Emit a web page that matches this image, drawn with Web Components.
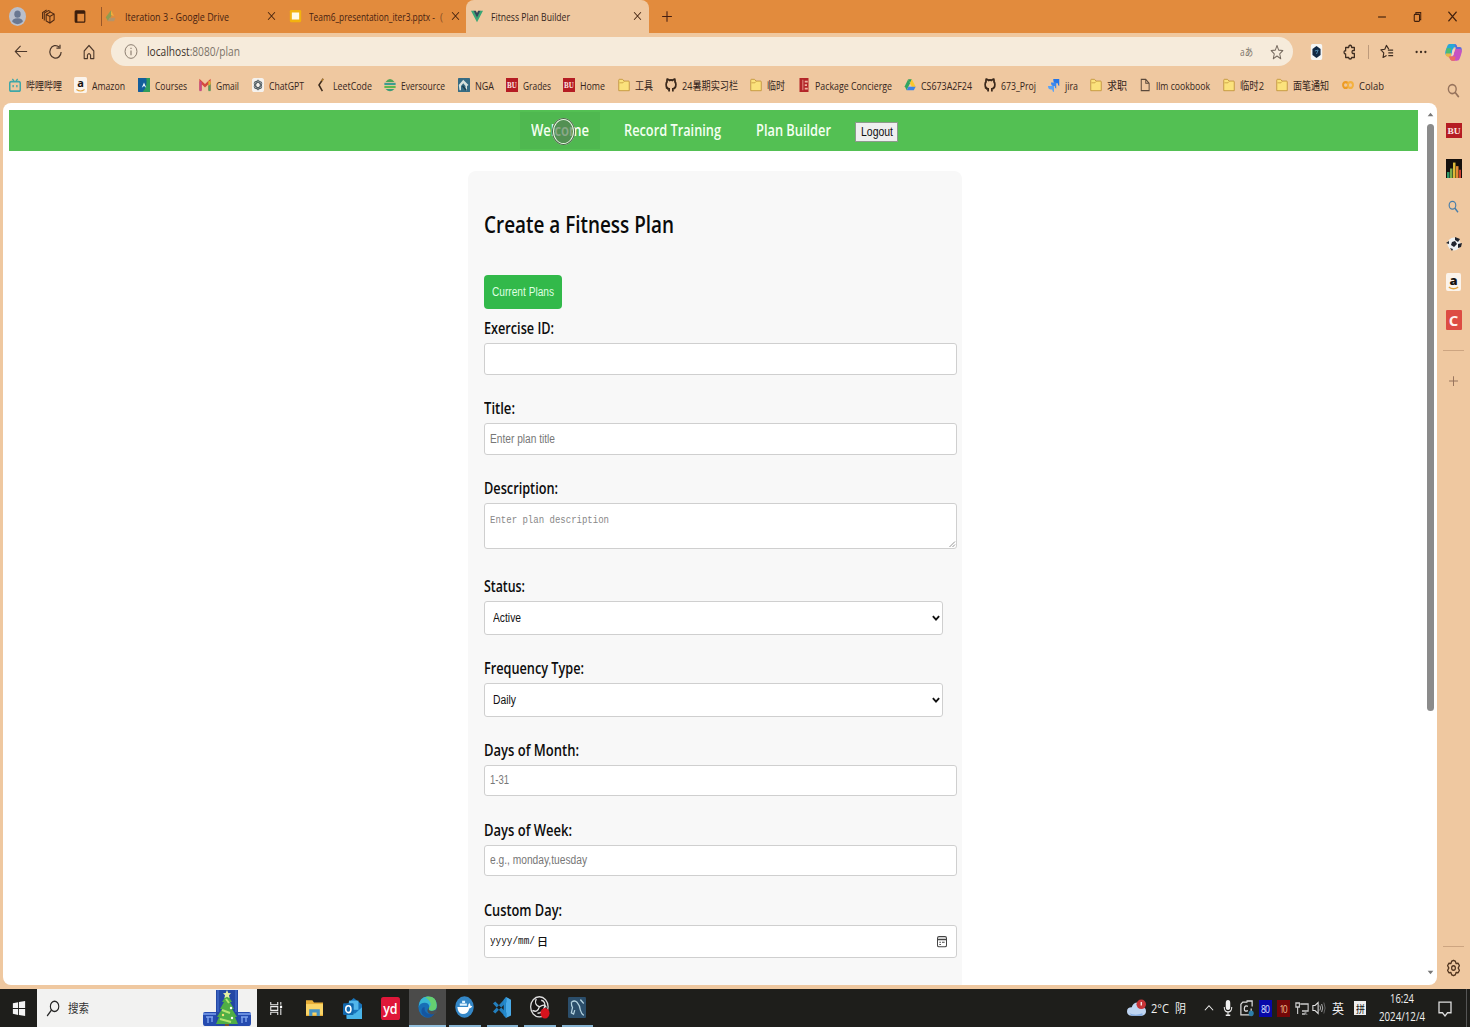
<!DOCTYPE html>
<html lang="en">
<head>
<meta charset="utf-8">
<title>Fitness Plan Builder</title>
<style>
html,body{margin:0;height:100%;overflow:hidden}
body{font-family:"Open Sans","Noto Sans CJK SC",sans-serif;font-size:11.5px;color:#35251b}
</style>
</head>
<body>
<desktop-screen></desktop-screen>
<script>
const ICONS = {
  avatar:'<circle cx="8" cy="8" r="8" fill="#b9bfcc"/><circle cx="8" cy="6" r="3" fill="#6a7891"/><path d="M3 12.500q0-3 5-3t5 3q-5 4-10 0" fill="#6a7891"/>',
  spaces:'<g fill="none" stroke="#4e2812" stroke-width="1.100"><path d="M5.500 5.500 10 3l4 2v6l-4.500 3-4-2zM5.500 5.500l4 2 4.500-2.500M9.500 7.500V14"/><path d="M3.500 11.500V4L8 1.500l2 1"/><path d="M1.700 10V3.500L6 1"/></g>',
  panel:'<rect x="2.500" y="2" width="11" height="12" rx="1" fill="none" stroke="#3a1d0c" stroke-width="1.300"/><path d="M2.500 2h11v3h-11zM2.500 5h2.500v9H2.500z" fill="#3a1d0c"/>',
  drive:'<path d="M5.500 1.500h5L8 6z" fill="#2b9f58"/><path d="M5.500 1.500 8 6 3.500 14 1 9.500z" fill="#31a561"/><path d="M10.500 1.500 15.500 10h-5L8 6z" fill="#fbc72b"/><path d="M6 10h9.500L13 14H3.500z" fill="#3d83e8"/>',
  drivefaded:'<path d="M8 1.500 10 6 4 14 1 9.500z" fill="#8f9c50"/><path d="M8 1.500 12 8 8 7z" fill="#f1ad3b"/><path d="M6 10h8L12 14H3.500z" fill="#b59369"/>',
  slides:'<rect x="1" y="1" width="14" height="14" rx="1.500" fill="#f2b20f"/><rect x="3.500" y="4" width="9" height="8" fill="#fffbe6"/>',
  vue:'<path d="M0 2h4l4 7 4-7h4L8 15z" fill="#3ba776"/><path d="M3.500 2h3L8 4.700 9.500 2h3L8 10z" fill="#31495a"/>',
  x:'<path d="m3 3 10 10M13 3 3 13" stroke="#40200e" stroke-width="1.400" fill="none"/>',
  plus:'<path d="M8 1.500v13M1.500 8h13" stroke="currentColor" stroke-width="1.400"/>',
  min:'<path d="M3.500 8h9" stroke="#40200e" stroke-width="1.300"/>',
  restore:'<rect x="4" y="5" width="6.500" height="8" rx="1" fill="none" stroke="#40200e" stroke-width="1.300"/><path d="M6 5V3h6v8h-1.500" fill="none" stroke="#40200e" stroke-width="1.200"/>',
  back:'<path d="M15 8H1.500M7.500 2 1.500 8l6 6" fill="none" stroke="#4c382b" stroke-width="1.250"/>',
  reload:'<path d="M14 8a6 6.300 0 1 1-2.200-5M12.800.8v3.400H9" fill="none" stroke="#4c382b" stroke-width="1.300"/>',
  home:'<path d="M2.500 7 8 1.500 13.500 7v7.500h-3.700V11Q8 8 6.200 11v3.500H2.500z" fill="none" stroke="#4c382b" stroke-width="1.250" stroke-linejoin="round"/>',
  info:'<ellipse cx="8" cy="8" rx="6.800" ry="7.300" fill="none" stroke="#807366" stroke-width="1"/><path d="M8 7v5M8 4v1.400" stroke="#807366" stroke-width="1.200"/>',
  star:'<path d="m8 1.500 1.900 4.600 4.800.4-3.600 3.300 1.200 5L8 12l-4.300 2.800 1.200-5L1.300 6.500l4.800-.4z" fill="none" stroke="#75695e" stroke-width="1.100" stroke-linejoin="round"/>',
  hex:'<rect x="1" y="0" width="14" height="16" rx="2" fill="#f5f6f5"/><path d="m8 2 5 3v6l-5 3-5-3V5z" fill="#102844"/><path d="m6 7 4-1-2 4" fill="none" stroke="#5490b5" stroke-width="1"/>',
  puzzle:'<path d="M3 3.500h3.500q0-2.300 1.700-2.300t1.700 2.300H13v3q-2.700-.4-2.700 1.500T13 9.500v4H9.900q0 1.500-1.700 1.500t-1.700-1.500H3V10Q1.200 10 1.200 8.300T3 6.800z" fill="none" stroke="#3d2c20" stroke-width="1.400" stroke-linejoin="round"/>',
  favs:'<path d="M10 5.500 7.300 1.500 5.500 5.600 1 6.300l3.300 3.200-.8 4.900 4-2.200" fill="none" stroke="#3d2c20" stroke-width="1.300" stroke-linejoin="round"/><path d="M9 6.500h6M9.500 9.500H15M9.500 12.500H15" stroke="#3d2c20" stroke-width="1.300"/>',
  dots:'<g fill="#3d2c20"><circle cx="3" cy="8" r="1.300"/><circle cx="8" cy="8" r="1.300"/><circle cx="13" cy="8" r="1.300"/></g>',
  copilot:'<path d="M4 1.500h5q1.500 0 2 2l-3 1-2 6H2q-2.500 0-1.500-3.500L2 3.500q.5-2 2-2" fill="#28a7d8"/><path d="M1 9h5l-1 3.500 2 2.500q-2 0-3-2.500l-2-1Q0 11 1 9" fill="#e9b646"/><path d="M1.500 5h4.500L5 9H1z" fill="#50bc6c"/><path d="M9 1.500q2 0 2.500 2.500H14q2.500 0 1.500 3.500l-1.500 4-4-2V5z" fill="#5b6bdc"/><path d="M10 5.500h4q2.500 0 1.500 3.500l-1.500 4q-.7 2-3 2H7q-2 0-3-3.500h3z" fill="#c653c2"/><path d="M4 11.500h6l-1 3.500H7q-2 0-3-3.500" fill="#ee6a62"/><path d="m7 6 2-.5-1 5-2 .5z" fill="#f5d5c9"/>',
  bili:'<rect x="1" y="4" width="14" height="11" rx="2" fill="none" stroke="#3fa7a7" stroke-width="2"/><path d="m4.500 1 2 2.500M11.500 1l-2 2.500M5.500 8v2.500M10.500 8v2.500" stroke="#3fa7a7" stroke-width="1.800"/>',
  amazon:'<rect width="16" height="16" rx="2" fill="#fbf4ec"/><path d="M3 12.500q5 3 10 0" stroke="#e3a33e" fill="none" stroke-width="1.200"/>',
  courses:'<rect width="16" height="16" rx="1.500" fill="#1d4b8d"/><path d="M0 0h11q2 8-4 16H1.500Q0 16 0 14.500z" fill="#135e9c"/><path d="M11 0h5v16H6q7-6 5-16" fill="#2e9c5b"/><path d="m5 11 3-6 3 6-3-2z" fill="#e9f5fc"/>',
  gmail:'<path d="M2 14V4l6 5 6-5v10" fill="none" stroke="#d64a3e" stroke-width="3"/><path d="M.5 4h3v11h-3z" fill="#c64f87"/><path d="M12.500 5h3v10h-3z" fill="#52a15d"/><path d="m12.500 3 3 1v3l-3 2z" fill="#e9ad33"/>',
  gpt:'<rect width="16" height="16" rx="3" fill="#f5f2ee"/><g fill="none" stroke="#4e5a60" stroke-width="1.100"><ellipse cx="8" cy="8" rx="3" ry="5.500"/><ellipse cx="8" cy="8" rx="3" ry="5.500" transform="rotate(60 8 8)"/><ellipse cx="8" cy="8" rx="3" ry="5.500" transform="rotate(120 8 8)"/></g>',
  leet:'<path d="M9.500 1 4 8l4.500 7" fill="none" stroke="#3c2a1b" stroke-width="2"/><path d="M7.500 3.500 10 1" stroke="#c98c31" stroke-width="1.500"/>',
  ever:'<path d="M2 4.500q6-7 12 0z" fill="#4da455"/><path d="M.5 5.500h15v2.500H.5z" fill="#3c9c91"/><path d="M.5 9h15v2.500H.5z" fill="#5cb850"/><path d="M2 12.500h12q-6 5.500-12 0" fill="#3b9b79"/>',
  nga:'<rect width="16" height="16" rx="1" fill="#356b83"/><path d="M1 8 7 2l7 6-2 1v5h-2V9L7 6 4 9v5H2" fill="#d7e2dd"/><path d="m6 9 5 5" stroke="#183e50" stroke-width="2"/>',
  bu:'<rect width="16" height="16" fill="#b51c23"/><text x="8" y="11.500" text-anchor="middle" font-family="Liberation Serif" font-weight="700" font-size="9.500" fill="#fbe4e1">BU</text>',
  folder:'<path d="M1 2.500Q1 1.500 2 1.500h4l2 2h6q1 0 1 1v10H1z" fill="#fbe27c" stroke="#bd8e36" stroke-width="1"/><path d="M2 5.500h4.500L8 4" fill="none" stroke="#c79c40"/>',
  github:'<path d="M5.500 15.500v-3q-4-.5-4-5Q1.500 5.600 2.700 4.300q-.4-1.800.4-3 1.700.2 2.900 1.300 2-.5 4 0Q11.200 1.500 12.900 1.300q.8 1.200.4 3 1.200 1.300 1.200 3.200 0 4.500-4 5v3" fill="none" stroke="#3a281b" stroke-width="2.300"/><path d="m1 11.500 2 .5q1 2.500 3 2" fill="none" stroke="#3a281b"/>',
  pack:'<path d="M2 0h12v16H2z" fill="#b32528"/><path d="M6 2h1v12H6zM9 3h4v2H9zM9 7h3v2H9zM9 11h4v2H9z" fill="#efb5a3"/>',
  jira:'<path d="M7 1h8v8q-2 0-2-3h-3q-3 0-3-5" fill="#2475e8"/><path d="M4 5h7v7q-2 0-2-3H7Q4 9 4 5" fill="#3c88ee"/><path d="M0 9h8v7q-2 0-2.500-3H4Q0 13 0 9" fill="#5ba3f5"/>',
  file:'<path d="M3 1.500h6L13.500 6v8.500H3zM9 1.500V6h4.500" fill="none" stroke="#5b493b" stroke-width="1.300"/>',
  colab:'<g fill="none" stroke-width="2.600"><circle cx="4.800" cy="8" r="3.400" stroke="#ed9b24"/><circle cx="11.200" cy="8" r="3.400" stroke="#f4b13f"/></g>',
  mag:'<circle cx="6.500" cy="6.500" r="4.800" fill="none" stroke="currentColor" stroke-width="1.700"/><path d="m10 10 4.500 5" stroke="currentColor" stroke-width="2"/>',
  chart:'<rect width="16" height="17" fill="#15100d"/><path d="M1 11h2.500v5H1z" fill="#2f9a69"/><path d="M4 8h2.500v8H4z" fill="#7cac4c"/><path d="M7 3h2.500v13H7z" fill="#dfba39"/><path d="M10 6h2.500v10H10z" fill="#e68a32"/><path d="M13 9h2v7h-2z" fill="#cb3f33"/>',
  soccer:'<circle cx="8" cy="8" r="6.500" fill="#edf0f1"/><path d="m6 6 3-1 2 3-3 3-3-2zM9 1l5 2-2 3-3-2zM12 8l4-1-1 4-3 1zM4 12l3 1-1 2zM0 7l3-2v3z" fill="#20242e"/>',
  cbox:'<rect width="16" height="16" rx="1" fill="#dd4c43"/>',
  gear:'<path d="M8 1.200 10 2l.7 2 2.300-.2 1.300 2.100L13 8l1.300 2.100-1.300 2.100-2.300-.2-.7 2-2 .8-2-.8-.7-2-2.300.2-1.300-2.100L3 8 1.700 5.900 3 3.800 5.300 4 6 2z" fill="none" stroke="#51351f" stroke-width="1.300" stroke-linejoin="round"/><circle cx="8" cy="8" r="2" fill="none" stroke="#51351f" stroke-width="1.300"/>',
  win:'<path d="m1 3 6-1v5.500H1zM8 1.800 15 1v6.500H8zM1 8.500h6V14l-6-1zM8 8.500h7V15l-7-1z" fill="#f4f4f4"/>',
  find:'<circle cx="9.800" cy="6" r="4.800" fill="none" stroke="#272727" stroke-width="1.300"/><path d="m6.300 9.500-5 5.500" stroke="#272727" stroke-width="1.400"/>',
  tree:'<path d="M13 0h22v36H13z" fill="#2448a4"/><path d="M0 24q0-2 2-2h11v14H2q-2 0-2-3zM35 22h11q2 0 2 2v9q0 3-2 3H35z" fill="#254bb0"/><path d="M0 24h13M35 24h13M3 27h7M38 27h7M5 27v6M9 27v5M39 27v6M43 27v5" stroke="#7fa4ed" stroke-width="1.400"/><path d="M15 0v22M33 0v22" stroke="#4c79d8"/><path d="m24 4 5 8h-2l4 7h-2l5 8h-2l3 7H13l3-7h-2l5-8h-2l4-7h-2z" fill="#4fae45"/><path d="m23 9 3 4M19 20l8 3M17 29l11 3" stroke="#b4e571" stroke-width="2"/><path d="m24 0 1.300 3 2.700.3-2 2 .6 3-2.600-1.500-2.600 1.500.6-3-2-2 2.700-.3z" fill="#e9f0a3"/><circle cx="28" cy="18" r="1.200" fill="#fff"/><circle cx="20" cy="25" r="1.200" fill="#ffdf77"/><circle cx="29" cy="28" r="1.200" fill="#fff"/><path d="M22 34h4v2h-4z" fill="#78502e"/>',
  task:'<g fill="none" stroke="#ededed" stroke-width="1.200"><path d="M2 1v3h8V1M2 15v-3h8v3"/><path d="M2 6h8v4H2zM13.500 1v3M13.500 8v7"/></g><path d="M12.500 5h2.500v2.500h-2.500z" fill="#fff"/>',
  explorer:'<path d="M0 1h6l1.500 2H16v12H0z" fill="#e7ae38"/><path d="M0 4.500h16V14H0z" fill="#fad567"/><path d="M3 9h10v6h-3v-3H6v3H3z" fill="#4693c4"/>',
  outlook:'<path d="m3 5 6-5 7 5v10H3z" fill="#1874bb"/><path d="M5 2h8v7H5z" fill="#52b6eb"/><path d="m3 8 7 4 6-5v9H3z" fill="#49b4e9"/><rect y="4" width="9" height="9" rx="1" fill="#1168ae"/><ellipse cx="4.500" cy="8.500" rx="2.200" ry="2.600" fill="none" stroke="#fff" stroke-width="1.300"/>',
  yd:'<rect width="16" height="16" rx="2" fill="#df1739"/><text x="8" y="11.500" text-anchor="middle" textLength="12" font-family="Open Sans" font-weight="600" font-size="10.500" fill="#fff">yd</text>',
  edge:'<circle cx="8" cy="8" r="7.700" fill="#176fb6"/><path d="M.5 8Q1 .3 8 .3q7.500 0 7.700 6.500 0 4-4.200 4-3.500 0-2-2.500Q9.500 5.500 7 5 2 4.500.5 8" fill="#39b8d4"/><path d="M6 .7q9.500-1.500 9.700 6 0 4.100-4.500 4-3-.4-1.700-2.500Q13 5 6 .7" fill="#65cf70"/><path d="M5.500 8q-.5 5 5 5 2.500 0 4-1-2.500 4-7 3.700Q2 14 3 10q.5-2 2.500-2" fill="#1556a1"/><path d="M9.400 8.500q-1.400 2.500 2.500 2.400 2 0 3.200-1L16 12l-2 1q-4 1-5.500-1T9.400 8.500" fill="#4b5155"/>',
  docker:'<circle cx="8" cy="8" r="7.800" fill="#3487c7"/><path d="M2 8h9q0-2 1-3 1.200 1 1 2 1 0 1.500.5-.7 1.500-2.500 1.500-1 4-5.500 4Q2.500 13 2 8" fill="#fff"/><path d="M4 5.500h6V7H4zM6 3.500h2.500V5H6z" fill="#e0f4ff"/>',
  code:'<path d="M11.500 0 16 2v12l-4.500 2z" fill="#49aae8"/><path d="m0 5 2-1.500L12 12v4zM0 11l2 1.500L12 4V0z" fill="#237fbe"/><path d="M11.500 0v16l-2-2V2z" fill="#2389cd"/>',
  obs:'<circle cx="7.500" cy="7.500" r="7" fill="#171515" stroke="#ddd" stroke-width="1"/><path d="M5 2q-2 4 2.500 5.500Q12 5 13 8M7.500 7.500Q6 12 2 10M9 3q4 1 2.500 5Q10 12 6 12" fill="none" stroke="#e4e4e4" stroke-width="1"/><circle cx="12" cy="12" r="3.600" fill="#d7131d"/>',
  mysql:'<rect width="16" height="16" rx="1" fill="#2b4e6b"/><path d="M3 4q3-2 5 0 3 3 3 6 1 3 3 4M3 4q0 3 1 4l-1 4 2 1 1-3M11 2l3 3" fill="none" stroke="#b4d2df" stroke-width="1.100"/>',
  cloud:'<path d="M4 14q-4 0-4-3.500T4 7q1-4 5-4 3.500 0 4.500 4Q16 7.500 16 10.500T12.500 14z" fill="#bfd5f2"/><path d="M2 12q5 2.500 11 0v2H4z" fill="#86aee4"/><circle cx="12" cy="4.500" r="4" fill="#c63437"/><path d="M12 2.500v3" stroke="#fff"/>',
  up:'<path d="m2.500 11 5.500-6 5.500 6" fill="none" stroke="#eee" stroke-width="1.400"/>',
  mic:'<rect x="5" y="0" width="6" height="10" rx="3" fill="#f1f1f1"/><path d="M3 7q0 5 5 5t5-5M8 12v3M5 15.300h6" fill="none" stroke="#eee" stroke-width="1.400"/>',
  capture:'<path d="M9 2H4L2 4v10h9l2-2V8M8 1h6v5" fill="none" stroke="#ddd" stroke-width="1.300"/><path d="M9.500 6Q6 4.500 5.700 8T9.500 10" fill="none" stroke="#ddd" stroke-width="1.300"/><circle cx="13" cy="12.500" r="2.700" fill="#2d7eaa"/>',
  n80:'<rect width="16" height="16" fill="#0808a8"/><text x="8" y="12" text-anchor="middle" textLength="11" font-family="Open Sans" font-size="10.500" fill="#dce0ff">80</text>',
  n10:'<rect width="16" height="16" fill="#730808"/><text x="8" y="12" text-anchor="middle" textLength="10" font-family="Open Sans" font-size="10.500" fill="#f1bb8a">10</text>',
  net:'<path d="M6 4h9v7H8M8 14h4M1 3h4v4H1zM3 7v7" fill="none" stroke="#ccc" stroke-width="1.300"/><path d="m10 11 4 4M14 11l-4 4" stroke="#999"/>',
  vol:'<path d="M1 5.500h2.500L7 2.500v11l-3.500-3H1z" fill="none" stroke="#e2e2e2" stroke-width="1.200"/><path d="M9 5.500q1.500 2.500 0 5M11 4q2.500 4 0 8" fill="none" stroke="#bbb"/><path d="M13.500 2.500q3 5.500 0 11" fill="none" stroke="#666"/>',
  notif:'<path d="M2 2h12v10h-3.500L8 15l-2.500-3H2z" fill="none" stroke="#ddd" stroke-width="1.300"/>',
  tup:'<path d="m3 11 5-6 5 6z" fill="#777"/>', tdown:'<path d="m3 5 5 6 5-6z" fill="#777"/>',
  chev:'<path d="m3 5 5 5.500L13 5" fill="none" stroke="#111" stroke-width="3"/>',
  cal:'<rect x="2" y="2" width="12" height="12.500" rx="2" fill="none" stroke="#444" stroke-width="1.400"/><path d="M2 5.500h12" stroke="#444" stroke-width="2"/><path d="M4.500 9h2M8 9h3.500M4.500 11.700h2" stroke="#444" stroke-width="1.300"/>',
  grip:'<path d="m3 14 11-11M9 14l5-5" stroke="#777" stroke-width="1.600"/>'
};

const component = (tag, css, html, ready) => customElements.define(tag, class extends HTMLElement {
  connectedCallback() {
    if (this.shadowRoot) return;
    const root = this.attachShadow({mode:'open'});
    root.innerHTML = `<style>*{box-sizing:border-box}${css}</style>${typeof html === 'function' ? html(this) : html}`;
    if (ready) ready(this, root);
  }
});

// Inline SVG icon; w/h in pixels, optional viewBox.
component('ui-icon', ':host{display:block;flex:none}svg{display:block}', el => {
  const w = el.getAttribute('w') || 14, h = el.getAttribute('h') || w;
  return `<svg width="${w}" height="${h}" viewBox="${el.getAttribute('box') || '0 0 16 16'}" preserveAspectRatio="none">${ICONS[el.getAttribute('name')]}</svg>`;
});

// A single letter centred over an icon tile.
component('letter-tile', ':host{display:grid;flex:none;place-items:center}ui-icon,span{grid-area:1/1}span{line-height:14px;font-weight:700}', el =>
  `<ui-icon name="${el.getAttribute('name')}" w="${el.getAttribute('w')}" h="${el.getAttribute('h')}"></ui-icon><span><slot></slot></span>`);

// A fixed-width cell that centres its content inside a bar.
component('bar-cell', ':host{display:flex;flex:none;align-items:center;justify-content:center;height:100%}', '<slot></slot>',
  el => { el.style.width = el.getAttribute('w') + 'px'; });

component('book-mark', ':host{display:flex;flex:none;align-items:center;height:100%}ui-icon,letter-tile{margin-right:5px}letter-tile{font-size:11px;color:#171310;margin-left:-1px}letter-tile+fit-text{margin-left:0}',
  el => { const i = el.getAttribute('icon');
    return `${i === 'amazon' ? '<letter-tile name="amazon" w="13" h="16"><i style="font-style:normal;display:block;margin-top:-4px">a</i></letter-tile>' : `<ui-icon name="${i}" w="12" h="14"></ui-icon>`}<fit-text w="${el.getAttribute('tw')}"><slot></slot></fit-text>`; },
  el => { el.style.width = el.getAttribute('w') + 'px'; });

component('browser-tabs', `
  :host{display:flex;height:33px;background:#e28b3d;align-items:center;color:#451e12}
  .sep{width:1px;height:19px;background:#98572a;margin:0 3px 0 3px}
  .t{display:flex;align-items:center;height:33px;flex:none;padding-bottom:1px}
  .t ui-icon:first-child{margin-right:8px}
  .a{background:#efc8a0;border-radius:8px 8px 0 0;width:183px;padding-left:5px;color:#35251b}
  .sp{flex:1}`,
  `<bar-cell w="34"><ui-icon name="avatar" w="17" h="19"></ui-icon></bar-cell>
   <bar-cell w="28"><ui-icon name="spaces" w="15" h="16"></ui-icon></bar-cell>
   <bar-cell w="36"><ui-icon name="panel" w="14" h="15"></ui-icon></bar-cell><div class="sep"></div>
   <div class="t" style="width:184px"><ui-icon name="drivefaded" w="12" h="14"></ui-icon><fit-text w="104">Iteration 3 - Google Drive</fit-text><ui-icon name="x" w="11" h="12" style="margin-left:37px"></ui-icon></div>
   <div class="t" style="width:177px"><ui-icon name="slides" w="13" h="14" style="margin-right:7px"></ui-icon><fit-text w="126">Team6_presentation_iter3.pptx -</fit-text><fit-text w="3" style="margin-left:5px;opacity:.55">(</fit-text><ui-icon name="x" w="11" h="12" style="margin-left:7px"></ui-icon></div>
   <div class="t a"><ui-icon name="vue" w="12" h="14"></ui-icon><fit-text w="79">Fitness Plan Builder</fit-text><ui-icon name="x" w="11" h="12" style="margin-left:62px"></ui-icon></div>
   <bar-cell w="36"><ui-icon name="plus" w="12" h="13"></ui-icon></bar-cell><div class="sp"></div>
   <bar-cell w="35"><ui-icon name="min" w="14"></ui-icon></bar-cell><bar-cell w="36"><ui-icon name="restore" w="13" h="14"></ui-icon></bar-cell><bar-cell w="35"><ui-icon name="x" w="13" h="15"></ui-icon></bar-cell>`);

component('browser-toolbar', `
  :host{display:flex;height:37px;align-items:center;padding-left:4px;background:#efc8a0}
  .addr{flex:none;display:flex;align-items:center;width:1182px;height:29px;border-radius:15px;background:#f6ebdb;margin-left:5px;padding:0 1px 0 3px;color:#7c7369;font-size:12.5px}
  b{font-weight:400;color:#3d332b}.sp{flex:1}.sep{width:1px;height:14px;background:#bd9a7b}`,
  `<bar-cell w="34"><ui-icon name="back" w="14" h="15"></ui-icon></bar-cell><bar-cell w="34"><ui-icon name="reload" w="15" h="16"></ui-icon></bar-cell><bar-cell w="34"><ui-icon name="home" w="14" h="16"></ui-icon></bar-cell>
   <div class="addr"><bar-cell w="33"><ui-icon name="info" w="14" h="15"></ui-icon></bar-cell><fit-text w="93"><b>localhost</b>:8080/plan</fit-text><div class="sp"></div><bar-cell w="30"><fit-text w="13" style="font-size:10px">aあ</fit-text></bar-cell><bar-cell w="31"><ui-icon name="star" w="14" h="16"></ui-icon></bar-cell></div>
   <bar-cell w="46"><ui-icon name="hex" w="13" h="16"></ui-icon></bar-cell><bar-cell w="22"><ui-icon name="puzzle" w="14" h="16"></ui-icon></bar-cell><bar-cell w="14"><div class="sep"></div></bar-cell>
   <bar-cell w="24"><ui-icon name="favs" w="14" h="15"></ui-icon></bar-cell><bar-cell w="43"><ui-icon name="dots" w="14"></ui-icon></bar-cell><bar-cell w="22"><ui-icon name="copilot" w="17" h="20"></ui-icon></bar-cell>`);

const marks = [['bili',66,36,'哔哩哔哩'],['amazon',63,33,'Amazon'],['courses',61,32,'Courses'],['gmail',53,23,'Gmail'],['gpt',64,35,'ChatGPT'],['leet',68,39,'LeetCode'],['ever',74,44,'Eversource'],['nga',48,19,'NGA'],['bu',57,28,'Grades'],['bu',55,25,'Home'],['folder',47,18,'工具'],['github',85,56,'24暑期实习栏'],['folder',48,18,'临时'],['pack',106,77,'Package Concierge'],['drive',80,51,'CS673A2F24'],['github',64,35,'673_Proj'],['jira',42,13,'jira'],['folder',49,20,'求职'],['file',84,54,'llm cookbook'],['folder',53,24,'临时2'],['folder',66,36,'面笔通知'],['colab',60,25,'Colab']];
component('bookmarks-bar', ':host{display:flex;height:33px;padding-left:9px;padding-bottom:3px;align-items:center}',
  marks.map(m => `<book-mark icon="${m[0]}" w="${m[1]}" tw="${m[2]}">${m[3]}</book-mark>`).join(''));

component('side-bar', `
  :host{display:flex;flex-direction:column;align-items:center;width:33px;flex:none;color:#96735c}
  div{display:flex;align-items:center;justify-content:center;height:38px;flex:none}
  i{display:block;width:21px;height:1px;background:#cda581;flex:none}.sp{flex:1}`,
  `<div style="height:41px"><ui-icon name="mag" w="13" h="15"></ui-icon></div><div><ui-icon name="bu" w="16" h="15"></ui-icon></div><div><ui-icon name="chart" w="16" h="19"></ui-icon></div>
   <div style="color:#487eaa"><ui-icon name="mag" w="11" h="13"></ui-icon></div><div><ui-icon name="soccer" w="16"></ui-icon></div><div><letter-tile name="amazon" w="15" h="18" style="font-size:13px;color:#171310"><b style="display:block;margin-top:-5px">a</b></letter-tile></div><div><letter-tile name="cbox" w="16" h="20" style="font-size:15px;color:#fff0ec">C</letter-tile></div>
   <i style="margin-top:11px"></i><div style="height:60px"><ui-icon name="plus" w="11" h="12"></ui-icon></div><span class="sp"></span><i></i><div style="height:42px"><ui-icon name="gear" w="15" h="18"></ui-icon></div>`);

component('nav-bar', `
  :host{display:flex;position:relative;height:41px;background:#53c053;color:#f4fff1;font-size:16px;font-weight:600;align-items:center}
  fit-text{padding-bottom:2px}
  .on{background:#4fb850;height:37px;width:80px;margin-left:511px;padding-left:11px;display:flex;align-items:center}
  .b{margin:2px 0 0 24px;width:43px;height:20px;background:#efefef;border:1px solid #8d9a8c;color:#111;font:12px "Liberation Sans",sans-serif;display:flex;align-items:center;justify-content:center}
  .b fit-text{padding:0}
  .c{position:absolute;left:543px;top:8px;width:23px;height:27px;border-radius:50%;border:2px solid #e9fbe5;outline:1px solid #4b6b49;outline-offset:-1px;background:#567d55aa}`,
  `<div class="on"><fit-text w="58">Welcome</fit-text></div><fit-text w="97" style="margin-left:24px">Record Training</fit-text><fit-text w="75" style="margin-left:35px">Plan Builder</fit-text><div class="b"><fit-text w="32">Logout</fit-text></div><div class="c"></div>`);

// One labelled control: h = control height, gap = space below it.
component('form-field', `
  :host{display:block;flex:none}
  .l{height:28px;display:flex;align-items:center;font-weight:600;font-size:16px;color:#0d0d0d;padding-bottom:2px}
  .c{display:flex;align-items:center;background:#fff;border:1px solid #cfcfcf;border-radius:3px;width:473px;padding:0 6px 1px 5px;font:12px "Liberation Sans",sans-serif;color:#777;justify-content:space-between}
  .select{width:459px;color:#111;padding:0 1px 1px 8px}
  .area{font:11px "Liberation Mono",monospace;align-items:flex-start;padding:10px 0 0 5px;color:#888}
  .area ui-icon{align-self:flex-end}
  .date{font:11px "Liberation Mono","Noto Sans CJK SC",monospace;color:#111;padding-right:8px}.date span{display:flex;align-items:center;gap:2px}`,
  el => {
    const a = n => el.getAttribute(n), k = a('kind') || 'text';
    const text = a('text') ? `<fit-text w="${a('tw')}">${a('text')}</fit-text>` : '';
    const tail = {select:'<ui-icon name="chev" w="10"></ui-icon>', area:'<ui-icon name="grip" w="8"></ui-icon>', date:'<ui-icon name="cal" w="12" h="13"></ui-icon>'}[k] || '';
    return `<div class="l"><fit-text w="${a('lw')}">${a('label')}</fit-text></div><div class="c ${k}" style="height:${a('h')}px;margin-bottom:${a('gap')}px"><span>${text}${k === 'date' ? '<fit-text w="11" style="font-weight:500">日</fit-text>' : ''}</span>${tail}</div>`;
  });

component('plan-form', `
  :host{display:flex;flex-direction:column;margin:20px 0 0 459px;width:494px;height:820px;overflow:hidden;background:#f8f8f8;border-radius:8px;padding-left:16px}
  .h{font-size:24px;font-weight:600;color:#0b0b0b;height:40px;margin-top:32px;display:flex;align-items:center}
  .b{margin:32px 0 7px;width:78px;height:34px;border-radius:4px;background:#32b94a;color:#dfffe1;display:flex;align-items:center;justify-content:center;font:12px "Liberation Sans",sans-serif;flex:none}`,
  `<div class="h"><fit-text w="190">Create a Fitness Plan</fit-text></div><div class="b"><fit-text w="62">Current Plans</fit-text></div>
   <form-field label="Exercise ID:" lw="70" h="32" gap="20" style="margin-top:-1px"></form-field>
   <form-field label="Title:" lw="31" h="32" gap="20" text="Enter plan title" tw="65"></form-field>
   <form-field label="Description:" lw="74" h="46" gap="24" kind="area" text="Enter plan description" tw="119"></form-field>
   <form-field label="Status:" lw="41" h="34" gap="20" kind="select" text="Active" tw="28"></form-field>
   <form-field label="Frequency Type:" lw="100" h="34" gap="20" kind="select" text="Daily" tw="23"></form-field>
   <form-field label="Days of Month:" lw="95" h="31" gap="21" text="1-31" tw="19"></form-field>
   <form-field label="Days of Week:" lw="88" h="31" gap="21" text="e.g., monday,tuesday" tw="97"></form-field>
   <form-field label="Custom Day:" lw="78" h="33" gap="0" kind="date" text="yyyy/mm/" tw="45"></form-field>`);

component('page-view', `
  :host{display:flex;flex:1;min-height:0;margin:0 0 4px 3px;background:#fff;border-radius:8px;overflow:hidden}
  main{display:block;width:1409px;margin:7px 8px 0 6px;flex:none}
  aside{width:11px;display:flex;flex-direction:column;align-items:center;padding:7px 2px 8px 0}
  .th{width:7px;height:587px;border-radius:4px;background:#8b8b8b;margin-top:5px}.sp{flex:1}`,
  `<main><nav-bar></nav-bar><plan-form></plan-form></main><aside><ui-icon name="tup" w="9"></ui-icon><div class="th"></div><div class="sp"></div><ui-icon name="tdown" w="9"></ui-icon></aside>`);

component('task-bar', `
  :host{display:flex;height:38px;background:#1e1e1b;color:#f1f1f1;font-size:12px}
  .s{display:flex;align-items:center;width:220px;background:#f2f2f1;color:#333;padding-left:9px}
  .run{border-bottom:2px solid #86b3d1;margin:0 3px}.on{background:#4b4b4a;border-bottom:2px solid #92bfdd}
  .sp{flex:1}.clk{display:flex;flex-direction:column;align-items:center;justify-content:center;line-height:18px}
  .py{display:flex;align-items:center;justify-content:center;width:12px;height:14px;background:#eee;color:#111;font-size:10px}
  .peek{width:1px;background:#555;margin:0 3px 0 8px}`,
  `<bar-cell w="37"><ui-icon name="win" w="14" h="17"></ui-icon></bar-cell>
   <div class="s"><ui-icon name="find" w="14" h="17"></ui-icon><fit-text w="21" style="margin-left:8px">搜索</fit-text><ui-icon name="tree" w="48" h="36" box="0 0 48 36" style="margin-left:114px"></ui-icon></div>
   <bar-cell w="38"><ui-icon name="task" w="14" h="15"></ui-icon></bar-cell><bar-cell w="38"><ui-icon name="explorer" w="17" h="18"></ui-icon></bar-cell><bar-cell w="38"><ui-icon name="outlook" w="19" h="21"></ui-icon></bar-cell><bar-cell w="38"><ui-icon name="yd" w="19" h="23"></ui-icon></bar-cell>
   <bar-cell w="37" class="on"><ui-icon name="edge" w="19" h="22"></ui-icon></bar-cell><bar-cell w="31.500" class="run"><ui-icon name="docker" w="19" h="22"></ui-icon></bar-cell><bar-cell w="31.500" class="run"><ui-icon name="code" w="18" h="21"></ui-icon></bar-cell><bar-cell w="31.500" class="run"><ui-icon name="obs" w="20" h="23"></ui-icon></bar-cell><bar-cell w="31.500" class="run"><ui-icon name="mysql" w="18" h="21"></ui-icon></bar-cell>
   <div class="sp"></div>
   <bar-cell w="22"><ui-icon name="cloud" w="19" h="19"></ui-icon></bar-cell><bar-cell w="25"><fit-text w="18">2°C</fit-text></bar-cell><bar-cell w="28" style="justify-content:flex-start;padding-left:3px"><fit-text w="11">阴</fit-text></bar-cell>
   <bar-cell w="18"><ui-icon name="up" w="12"></ui-icon></bar-cell><bar-cell w="19"><ui-icon name="mic" w="12" h="16"></ui-icon></bar-cell><bar-cell w="19"><ui-icon name="capture" w="15" h="17"></ui-icon></bar-cell><bar-cell w="18"><ui-icon name="n80" w="13" h="17"></ui-icon></bar-cell><bar-cell w="19"><ui-icon name="n10" w="13" h="17"></ui-icon></bar-cell>
   <bar-cell w="18"><ui-icon name="net" w="14" h="16"></ui-icon></bar-cell><bar-cell w="16"><ui-icon name="vol" w="14" h="16"></ui-icon></bar-cell><bar-cell w="21"><fit-text w="12" style="font-size:13px;margin-top:-2px">英</fit-text></bar-cell><bar-cell w="24"><div class="py"><fit-text w="9">拼</fit-text></div></bar-cell>
   <bar-cell w="60"><div class="clk"><fit-text w="24">16:24</fit-text><fit-text w="46">2024/12/4</fit-text></div></bar-cell><bar-cell w="26"><ui-icon name="notif" w="16" h="17"></ui-icon></bar-cell><div class="peek"></div>`);

component('desktop-screen', `
  :host{display:flex;flex-direction:column;width:1470px;height:1027px;background:#efc8a0}
  .m{display:flex;height:919px}.l{display:flex;flex-direction:column;width:1437px}`,
  `<browser-tabs></browser-tabs><browser-toolbar></browser-toolbar><div class="m"><div class="l"><bookmarks-bar></bookmarks-bar><page-view></page-view></div><side-bar></side-bar></div><task-bar></task-bar>`);

// Text condensed or stretched horizontally to the width in its w attribute.
component('fit-text', ':host{display:block;flex:none;white-space:nowrap;overflow:visible}span{display:inline-block;transform-origin:0 50%}', '<span><slot></slot></span>',
  (el, root) => {
    const span = root.querySelector('span'), w = +el.getAttribute('w');
    el.style.width = w + 'px';
    span.style.transform = `scaleX(${w / span.getBoundingClientRect().width})`;
  });
</script>
</body>
</html>
